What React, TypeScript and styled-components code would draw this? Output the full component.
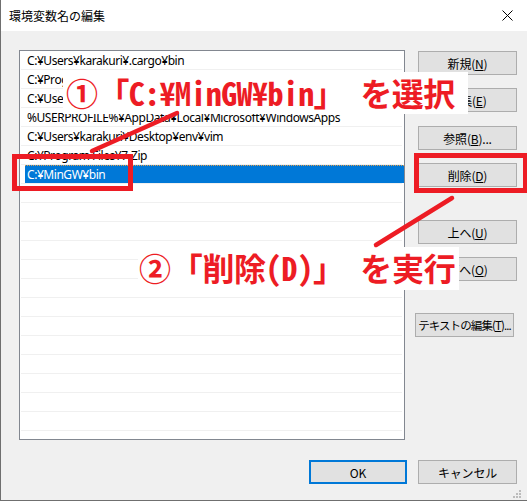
import styled, { createGlobalStyle } from 'styled-components';

const GlobalStyle = createGlobalStyle`
  body {
    margin: 0;
    background: #f0f0f0;
    font-family: 'Noto Sans', 'Noto Sans CJK JP', sans-serif;
  }
`;

const Window = styled.div`
  position: relative;
  width: 527px;
  height: 501px;
  box-sizing: border-box;
  display: flex;
  flex-direction: column;
  border-left: 1px solid #6f6f6f;
  border-bottom: 1px solid #6f6f6f;
  background: #f0f0f0;
  overflow: hidden;
`;

const TitleBar = styled.div`
  height: 31px;
  flex-shrink: 0;
  display: flex;
  align-items: center;
  justify-content: space-between;
  padding: 0 14px 0 8px;
  background: #fff;
`;

const Title = styled.span`
  font-family: 'Noto Sans CJK JP', sans-serif;
  font-size: 12px;
  color: #000;
`;

const Body = styled.div`
  flex: 1;
  display: flex;
  flex-direction: column;
  padding: 19px 10px 0 18px;
`;

const Main = styled.div`
  display: flex;
  gap: 13px;
`;

const ListBox = styled.div`
  width: 390px;
  height: 390px;
  box-sizing: border-box;
  border: 1px solid #828790;
  background: #fff;
  overflow: hidden;
`;

const Row = styled.div`
  height: 19px;
  box-sizing: border-box;
  margin: 0 2px 0 1px;
  border-bottom: 1px solid #f0f0f0;
  padding-left: 4px;
  display: flex;
`;

const Item = styled.div<{ $selected?: boolean }>`
  flex: 1;
  display: flex;
  align-items: center;
  padding-left: 2px;
  font-size: 12px;
  letter-spacing: -0.45px;
  white-space: nowrap;
  color: ${(p) => (p.$selected ? '#fff' : '#000')};
  background: ${(p) => (p.$selected ? '#0078d7' : 'transparent')};
  border-top: 1px dotted ${(p) => (p.$selected ? '#e0a050' : 'transparent')};
  margin-right: ${(p) => (p.$selected ? '-2px' : '0')};
`;

const ButtonColumn = styled.div`
  display: flex;
  flex-direction: column;
  padding-top: 1px;
`;

const Button = styled.button<{
  $gap?: number;
  $shift?: number;
  $default?: boolean;
  $tight?: boolean;
}>`
  width: ${(p) => (p.$default ? 98 : 99)}px;
  height: 24px;
  margin-top: ${(p) => p.$gap ?? 0}px;
  margin-left: ${(p) => p.$shift ?? 0}px;
  box-sizing: border-box;
  border: ${(p) => (p.$default ? '2px solid #0078d7' : '1px solid #adadad')};
  background: #e1e1e1;
  font-family: 'Noto Sans CJK JP', sans-serif;
  font-size: ${(p) => (p.$tight ? 11.5 : 12)}px;
  letter-spacing: ${(p) => (p.$tight ? -0.9 : -0.2)}px;
  color: #000;
  padding: 0;
  white-space: nowrap;
`;

const Footer = styled.div`
  display: flex;
  justify-content: flex-end;
  gap: 11px;
  margin-top: 20px;
`;

const U = styled.span`
  text-decoration: underline;
`;

const Grip = styled.svg`
  position: absolute;
  right: 5px;
  bottom: 1px;
`;

const Overlay = styled.svg`
  position: absolute;
  left: 0;
  top: 0;
  pointer-events: none;
`;

const Frame = styled.div<{ $x: number; $y: number; $w: number; $h: number }>`
  position: absolute;
  left: ${(p) => p.$x - 1}px;
  top: ${(p) => p.$y}px;
  width: ${(p) => p.$w}px;
  height: ${(p) => p.$h}px;
  box-sizing: border-box;
  border: 5px solid #ed1c24;
`;

const Callout = styled.div<{
  $x: number;
  $y: number;
  $w: number;
  $h: number;
  $pad: number;
  $track: number;
}>`
  position: absolute;
  left: ${(p) => p.$x - 1}px;
  top: ${(p) => p.$y}px;
  width: ${(p) => p.$w}px;
  height: ${(p) => p.$h}px;
  background: #fff;
  display: flex;
  align-items: center;
  padding: 0 0 3px ${(p) => p.$pad}px;
  box-sizing: border-box;
  color: #ed1c24;
  font-family: 'Noto Sans Mono CJK JP', 'Noto Sans CJK JP', sans-serif;
  font-weight: bold;
  font-size: 32px;
  letter-spacing: ${(p) => p.$track}px;
  white-space: pre;
  line-height: 1;
`;

const rows = [
  'C:¥Users¥karakuri¥.cargo¥bin',
  'C:¥Program Files¥Git¥cmd',
  'C:¥Users¥karakuri¥go¥bin',
  '%USERPROFILE%¥AppData¥Local¥Microsoft¥WindowsApps',
  'C:¥Users¥karakuri¥Desktop¥env¥vim',
  'C:¥Program Files¥7-Zip',
  'C:¥MinGW¥bin',
];

const App = () => {
  const filled = [...rows, ...Array(14).fill('')];
  return (
    <>
      <GlobalStyle />
      <Window>
        <TitleBar>
          <Title>環境変数名の編集</Title>
          <svg width='11' height='11' viewBox='0 0 11 11'>
            <path d='M0.5 0.5 L10.5 10.5 M10.5 0.5 L0.5 10.5' stroke='#000' strokeWidth='1' />
          </svg>
        </TitleBar>
        <Body>
          <Main>
            <ListBox>
              {filled.map((text, i) => (
                <Row key={i}>
                  <Item $selected={i === 6}>{text}</Item>
                </Row>
              ))}
            </ListBox>
            <ButtonColumn>
              <Button>
                新規(<U>N</U>)
              </Button>
              <Button $gap={13}>
                編集(<U>E</U>)
              </Button>
              <Button $gap={14}>
                参照(<U>B</U>)...
              </Button>
              <Button $gap={13}>
                削除(<U>D</U>)
              </Button>
              <Button $gap={33}>
                上へ(<U>U</U>)
              </Button>
              <Button $gap={13}>
                下へ(<U>O</U>)
              </Button>
              <Button $gap={32} $shift={-3} $tight>
                テキストの編集(<U>T</U>)...
              </Button>
            </ButtonColumn>
          </Main>
          <Footer>
            <Button $default>OK</Button>
            <Button>キャンセル</Button>
          </Footer>
        </Body>
        <Grip width='10' height='10' viewBox='0 0 10 10'>
          <rect x='7' y='1' width='2' height='2' fill='#bcbcbc' />
          <rect x='4' y='4' width='2' height='2' fill='#bcbcbc' />
          <rect x='7' y='4' width='2' height='2' fill='#bcbcbc' />
          <rect x='1' y='7' width='2' height='2' fill='#bcbcbc' />
          <rect x='4' y='7' width='2' height='2' fill='#bcbcbc' />
          <rect x='7' y='7' width='2' height='2' fill='#bcbcbc' />
        </Grip>

        <Callout $x={63} $y={72} $w={405} $h={42} $pad={3} $track={-0.6}>
          ①「C:¥MinGW¥bin」 を選択
        </Callout>
        <Callout $x={138} $y={247} $w={321} $h={43} $pad={1} $track={-0.3}>
          ②「削除(D)」 を実行
        </Callout>
        <Frame $x={12} $y={154} $w={121} $h={37} />
        <Frame $x={414} $y={153} $w={114} $h={40} />
        <Overlay width='527' height='501'>
          <g stroke='#ed1c24' strokeWidth='4.5' strokeLinecap='round'>
            <line x1='91' y1='151' x2='176' y2='113' />
            <line x1='375' y1='245' x2='451' y2='198' />
          </g>
        </Overlay>
      </Window>
    </>
  );
};

export default App;
